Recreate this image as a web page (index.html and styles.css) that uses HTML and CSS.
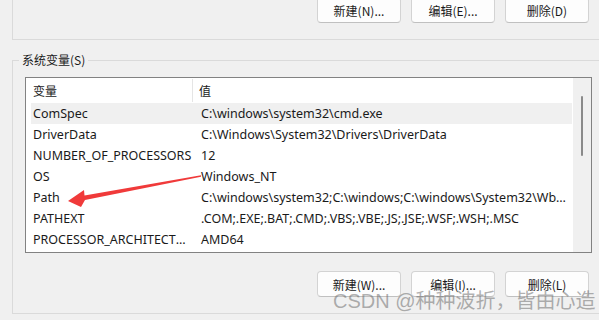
FILE: index.html
```html
<!DOCTYPE html>
<html lang="zh-CN">
<head>
    <meta charset="UTF-8">
    <meta name="viewport" content="width=device-width, initial-scale=1.0">
    <title>环境变量</title>
    <link rel="stylesheet" href="styles.css">
</head>
<body>
    <div class="group-top">
        <div class="btn-row">
            <button class="btn">新建(N)...</button>
            <button class="btn">编辑(E)...</button>
            <button class="btn">删除(D)</button>
        </div>
    </div>

    <fieldset class="group">
        <legend>系统变量(S)</legend>

        <div class="listbox">
            <div class="list">
                <div class="head">
                    <div class="name">变量</div>
                    <div class="value">值</div>
                </div>
                <div class="row selected">
                    <div class="name">ComSpec</div>
                    <div class="value">C:\windows\system32\cmd.exe</div>
                </div>
                <div class="row">
                    <div class="name">DriverData</div>
                    <div class="value">C:\Windows\System32\Drivers\DriverData</div>
                </div>
                <div class="row">
                    <div class="name">NUMBER_OF_PROCESSORS</div>
                    <div class="value">12</div>
                </div>
                <div class="row">
                    <div class="name">OS</div>
                    <div class="value">Windows_NT</div>
                </div>
                <div class="row">
                    <div class="name">Path</div>
                    <div class="value">C:\windows\system32;C:\windows;C:\windows\System32\Wbem;C:\windows\System32\WindowsPowerShell\v1.0\</div>
                </div>
                <div class="row">
                    <div class="name">PATHEXT</div>
                    <div class="value">.COM;.EXE;.BAT;.CMD;.VBS;.VBE;.JS;.JSE;.WSF;.WSH;.MSC</div>
                </div>
                <div class="row">
                    <div class="name">PROCESSOR_ARCHITECTURE</div>
                    <div class="value">AMD64</div>
                </div>
            </div>
            <div class="scrollbar">
                <div class="thumb"></div>
            </div>
        </div>

        <div class="btn-row bottom">
            <button class="btn">新建(W)...</button>
            <button class="btn">编辑(I)...</button>
            <button class="btn">删除(L)</button>
        </div>
    </fieldset>

    <!-- 红色箭头，指向 Path -->
    <svg class="arrow" width="599" height="320" viewBox="0 0 599 320">
        <polygon points="68,201 84,190 84.5,195.5 201,175.3 201,176.7 85,200 81,207" fill="#f03a3a"/>
    </svg>

    <div class="watermark">CSDN @种种波折，皆由心造</div>
</body>
</html>
```

FILE: styles.css
```css
html,body {
	margin: 0;
	padding: 0;
}

body {
	width: 599px;
	height: 320px;
	overflow: hidden;
	position: relative;
	background-color: #f0f0f0;
	color: #1a1a1a;
	font-family: "Noto Sans", "Noto Sans CJK SC", sans-serif;
	font-size: 12px;
}

.group-top {
	width: 640px;
	height: 42px;
	margin-left: 12px;
	border-left: 1px solid #dadada;
	border-bottom: 1px solid #dadada;
	padding-left: 304px;
	box-sizing: content-box;
}

.btn-row {
	display: flex;
	gap: 10px;
}

.group-top .btn-row {
	margin-top: -3px;
}

.btn {
	width: 84px;
	height: 26px;
	padding: 0;
	background-color: #fdfdfd;
	border: 1px solid #d3d3d3;
	border-bottom-color: #c0c0c0;
	border-radius: 4px;
	font-family: "Noto Sans CJK SC", sans-serif;
	font-size: 12px;
	color: #1a1a1a;
}

.group {
	width: 640px;
	margin: 12px 0 0 12px;
	padding: 0 0 16px 0;
	border: 1px solid #dadada;
	min-inline-size: 0;
}

.group legend {
	margin-left: 6px;
	padding: 0 3px;
	line-height: 16px;
	font-family: "Noto Sans CJK SC", sans-serif;
}

.listbox {
	display: flex;
	width: 565px;
	height: 174px;
	margin: 9px 0 0 12px;
	border: 1px solid #828282;
	background-color: #fff;
}

.list {
	flex: 1;
	min-width: 0;
	overflow: hidden;
	padding-left: 5px;
}

.head,
.row {
	display: flex;
}

.head {
	height: 25px;
	align-items: center;
	font-family: "Noto Sans CJK SC", sans-serif;
}

.head .name {
	width: 153px;
	height: 23px;
	line-height: 23px;
	border-right: 1px solid #e5e5e5;
}

.head .value {
	padding-left: 6px;
}

.row {
	height: 21px;
	line-height: 21px;
	font-size: 12.5px;
}

.row.selected {
	background-color: #f0f0f0;
}

.name {
	width: 160px;
	padding: 0 6px 0 2px;
	flex-shrink: 0;
	white-space: nowrap;
	overflow: hidden;
	text-overflow: ellipsis;
}

.value {
	flex: 1;
	min-width: 0;
	padding: 0 2px 0 2px;
	white-space: nowrap;
	overflow: hidden;
	text-overflow: ellipsis;
}

.scrollbar {
	width: 18px;
	margin-left: 1px;
	flex-shrink: 0;
	background-color: #f0f0f0;
}

.thumb {
	width: 2px;
	height: 60px;
	margin: 18px 0 0 8px;
	border-radius: 1px;
	background-color: #8a8a8a;
}

.btn-row.bottom {
	margin-top: 18px;
	padding-left: 304px;
}

.arrow {
	position: absolute;
	left: 0;
	top: 0;
	pointer-events: none;
}

.watermark {
	position: absolute;
	left: 333px;
	top: 290px;
	font-family: "Liberation Sans", "Noto Sans CJK SC", sans-serif;
	font-size: 20px;
	line-height: 22px;
	color: rgba(110, 110, 110, 0.55);
	white-space: nowrap;
	pointer-events: none;
}
```
